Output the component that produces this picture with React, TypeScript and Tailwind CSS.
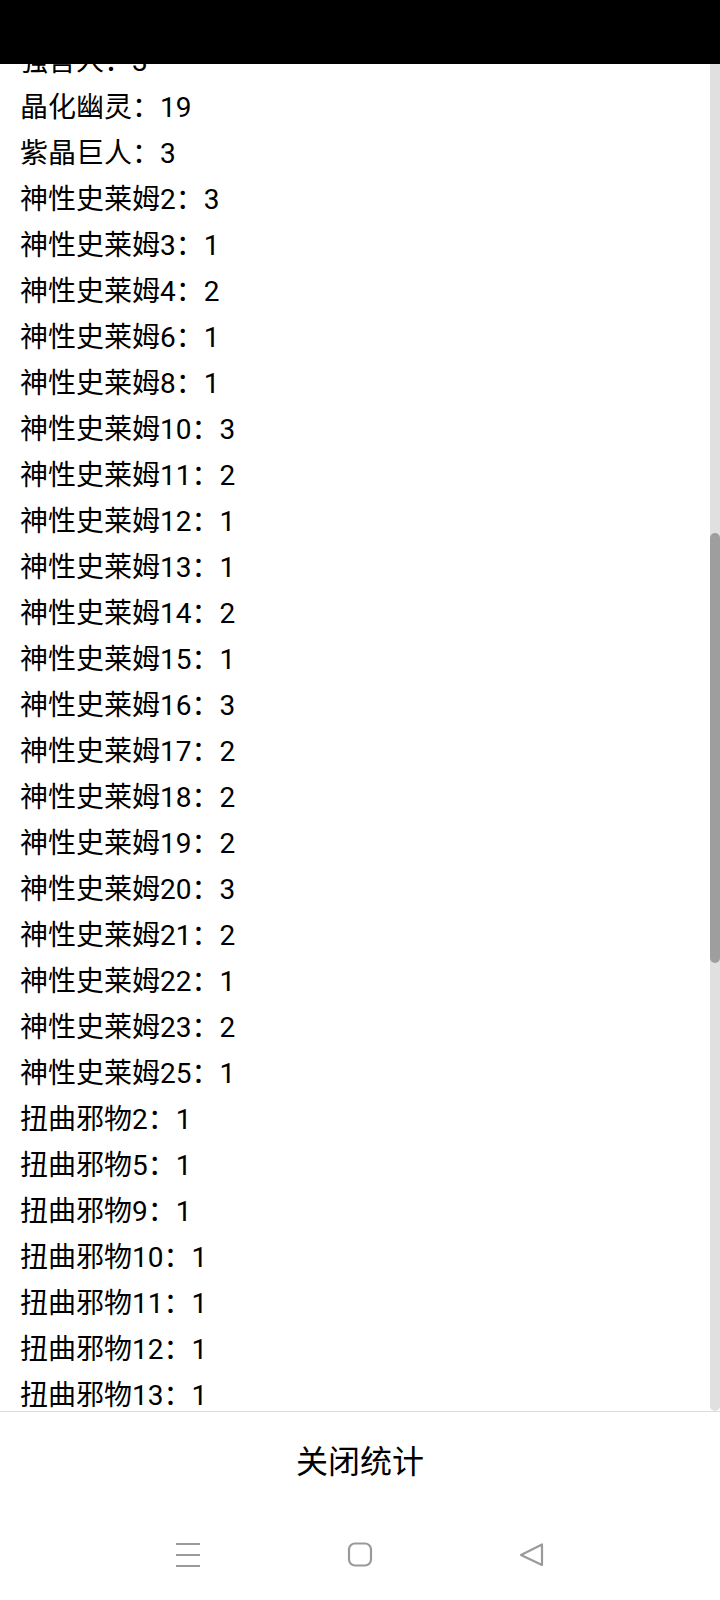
import React from 'react';

const rows: [string, number][] = [
  ['强言人', 3],
  ['晶化幽灵', 19],
  ['紫晶巨人', 3],
  ['神性史莱姆2', 3],
  ['神性史莱姆3', 1],
  ['神性史莱姆4', 2],
  ['神性史莱姆6', 1],
  ['神性史莱姆8', 1],
  ['神性史莱姆10', 3],
  ['神性史莱姆11', 2],
  ['神性史莱姆12', 1],
  ['神性史莱姆13', 1],
  ['神性史莱姆14', 2],
  ['神性史莱姆15', 1],
  ['神性史莱姆16', 3],
  ['神性史莱姆17', 2],
  ['神性史莱姆18', 2],
  ['神性史莱姆19', 2],
  ['神性史莱姆20', 3],
  ['神性史莱姆21', 2],
  ['神性史莱姆22', 1],
  ['神性史莱姆23', 2],
  ['神性史莱姆25', 1],
  ['扭曲邪物2', 1],
  ['扭曲邪物5', 1],
  ['扭曲邪物9', 1],
  ['扭曲邪物10', 1],
  ['扭曲邪物11', 1],
  ['扭曲邪物12', 1],
  ['扭曲邪物13', 1],
];

const font = "font-['Roboto','Noto_Sans_CJK_SC',sans-serif]";

const App: React.FC = () => {
  return (
    <div className={`w-[720px] h-[1600px] flex flex-col bg-white text-black ${font}`}>
      {/* status bar */}
      <div className="h-[64px] bg-black shrink-0" />

      {/* stats list, scrolled part way */}
      <div className="h-[1347px] flex overflow-hidden shrink-0">
        <div className="flex-1 overflow-hidden">
          <ul className="-mt-[25px] pl-5">
            {rows.map(([name, count]) => (
              <li key={name} className="h-[46px] leading-[46px] text-[28px] whitespace-nowrap">
                {name}：{count}
              </li>
            ))}
          </ul>
        </div>
        <div className="w-[10px] bg-[#e0e0e0] rounded-b-full">
          <div className="mt-[469px] h-[430px] bg-[#9e9e9e] rounded-full" />
        </div>
      </div>

      <div className="h-px bg-[#dcdcdc]" />

      {/* close button */}
      <div className="h-[100px] flex items-center justify-center">
        <span className="text-[32px]">关闭统计</span>
      </div>

      {/* navigation bar */}
      <div className="flex-1 flex items-center justify-center gap-[146px] pb-[2px]">
        <svg width="26" height="26" viewBox="0 0 26 26" fill="none" stroke="#9a9a9a" strokeWidth="2.2">
          <path d="M1 2h24M1 13h24M1 24h24" />
        </svg>
        <svg width="26" height="26" viewBox="0 0 26 26" fill="none" stroke="#9a9a9a" strokeWidth="2.2">
          <rect x="2" y="1.5" width="22" height="22" rx="6" />
        </svg>
        <svg width="26" height="26" viewBox="0 0 26 26" fill="none" stroke="#9a9a9a" strokeWidth="2.2" strokeLinejoin="round">
          <path d="M23 2.5v20.5L2 13z" />
        </svg>
      </div>
    </div>
  );
};

export default App;
